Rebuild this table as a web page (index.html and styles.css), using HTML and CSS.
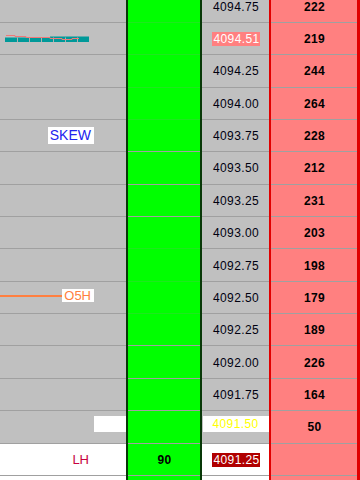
FILE: index.html
```html
<!DOCTYPE html>
<html>
<head>
<meta charset="utf-8">
<link rel="stylesheet" href="styles.css">
</head>
<body>
<div class="ladder">
  <div class="row">
    <div class="cell c-left"><div class="lbl"></div><div class="slot"></div></div>
    <div class="cell c-vol merged"></div>
    <div class="cell c-price">4094.75</div>
    <div class="cell c-ask">222</div>
  </div>
  <div class="row">
    <div class="cell c-left"><div class="lbl start">
      <svg class="spark" width="86" height="9" viewBox="0 0 86 9">
        <rect x="0" y="2.5" width="84" height="4.5" fill="#009999"/>
        <rect x="45" y="1.5" width="39" height="5.5" fill="#009999"/>
        <g stroke="#b0b0b0" stroke-width="1">
          <line x1="12.5" y1="2.5" x2="12.5" y2="7"/>
          <line x1="24.5" y1="2.5" x2="24.5" y2="7"/>
          <line x1="36.5" y1="2.5" x2="36.5" y2="7"/>
          <line x1="48.5" y1="2.5" x2="48.5" y2="7"/>
          <line x1="60.5" y1="2.5" x2="60.5" y2="7"/>
          <line x1="72.5" y1="2.5" x2="72.5" y2="7"/>
        </g>
        <polyline points="1,0.5 10,0.5 10,1.5 21,1.5 21,2.5 45,2.5 45,3.5 57,3.5 57,4.5 67,4.5 67,3.5 74,3.5" fill="none" stroke="#f07878" stroke-width="1"/>
      </svg>
    </div><div class="slot"></div></div>
    <div class="cell c-vol merged"></div>
    <div class="cell c-price"><span class="pbox hi">4094.51</span></div>
    <div class="cell c-ask">219</div>
  </div>
  <div class="row">
    <div class="cell c-left"><div class="lbl"></div><div class="slot"></div></div>
    <div class="cell c-vol merged"></div>
    <div class="cell c-price">4094.25</div>
    <div class="cell c-ask">244</div>
  </div>
  <div class="row">
    <div class="cell c-left"><div class="lbl"></div><div class="slot"></div></div>
    <div class="cell c-vol merged"></div>
    <div class="cell c-price">4094.00</div>
    <div class="cell c-ask">264</div>
  </div>
  <div class="row">
    <div class="cell c-left"><div class="lbl"><span class="tag skew">SKEW</span></div><div class="slot"></div></div>
    <div class="cell c-vol"></div>
    <div class="cell c-price">4093.75</div>
    <div class="cell c-ask">228</div>
  </div>
  <div class="row">
    <div class="cell c-left"><div class="lbl"></div><div class="slot"></div></div>
    <div class="cell c-vol"></div>
    <div class="cell c-price">4093.50</div>
    <div class="cell c-ask">212</div>
  </div>
  <div class="row">
    <div class="cell c-left"><div class="lbl"></div><div class="slot"></div></div>
    <div class="cell c-vol"></div>
    <div class="cell c-price">4093.25</div>
    <div class="cell c-ask">231</div>
  </div>
  <div class="row">
    <div class="cell c-left"><div class="lbl"></div><div class="slot"></div></div>
    <div class="cell c-vol merged"></div>
    <div class="cell c-price">4093.00</div>
    <div class="cell c-ask">203</div>
  </div>
  <div class="row">
    <div class="cell c-left"><div class="lbl"></div><div class="slot"></div></div>
    <div class="cell c-vol merged"></div>
    <div class="cell c-price">4092.75</div>
    <div class="cell c-ask">198</div>
  </div>
  <div class="row">
    <div class="cell c-left"><div class="lbl up"><span class="oline"></span><span class="tag o5h">O5H</span></div><div class="slot"></div></div>
    <div class="cell c-vol merged"></div>
    <div class="cell c-price">4092.50</div>
    <div class="cell c-ask">179</div>
  </div>
  <div class="row">
    <div class="cell c-left"><div class="lbl"></div><div class="slot"></div></div>
    <div class="cell c-vol"></div>
    <div class="cell c-price">4092.25</div>
    <div class="cell c-ask">189</div>
  </div>
  <div class="row">
    <div class="cell c-left"><div class="lbl"></div><div class="slot"></div></div>
    <div class="cell c-vol"></div>
    <div class="cell c-price">4092.00</div>
    <div class="cell c-ask">226</div>
  </div>
  <div class="row">
    <div class="cell c-left"><div class="lbl"></div><div class="slot"></div></div>
    <div class="cell c-vol"></div>
    <div class="cell c-price">4091.75</div>
    <div class="cell c-ask">164</div>
  </div>
  <div class="row">
    <div class="cell c-left"><div class="lbl"></div><div class="slot"><span class="band"></span></div></div>
    <div class="cell c-vol"></div>
    <div class="cell c-price"><span class="band yellow">4091.50</span></div>
    <div class="cell c-ask">50</div>
  </div>
  <div class="row">
    <div class="cell c-left white"><div class="lbl"><span class="lh">LH</span></div><div class="slot"></div></div>
    <div class="cell c-vol">90</div>
    <div class="cell c-price white"><span class="pbox dark">4091.25</span></div>
    <div class="cell c-ask"></div>
  </div>
  <div class="row">
    <div class="cell c-left white"><div class="lbl"></div><div class="slot"></div></div>
    <div class="cell c-vol"></div>
    <div class="cell c-price white"></div>
    <div class="cell c-ask"></div>
  </div>
</div>
</body>
</html>
```

FILE: styles.css
```css
html, body {
  margin: 0;
  padding: 0;
  overflow: hidden;
}
body {
  width: 360px;
  height: 480px;
  background: #c0c0c0;
  font-family: "Liberation Sans", Arial, sans-serif;
}
.ladder {
  margin-top: -9.5px;
  display: flex;
  flex-direction: column;
}
.row {
  display: flex;
  height: 32.36px;
  flex: none;
}
.cell {
  box-shadow: inset 0 -1px 0 #a0a0a0;
  display: flex;
  align-items: center;
  justify-content: center;
  font-size: 12px;
  letter-spacing: 0.4px;
  padding-left: 1px;
  box-sizing: content-box;
}
.c-left {
  width: 126px;
  padding-left: 0;
  border-right: 2px solid #083808;
  background: #c0c0c0;
  justify-content: flex-end;
  align-items: stretch;
}
.c-vol {
  width: 71px;
  border-right: 2px solid #083808;
  background: #00ff00;
  font-weight: bold;
  color: #000;
}
.c-vol.merged {
  box-shadow: inset 0 -1px 0 #1ee81e;
}
.c-price {
  width: 66px;
  border-right: 2px solid #e00000;
  background: #c0c0c0;
  color: #000010;
}
.c-ask {
  width: 85px;
  border-right: 3px solid #e00000;
  background: #ff8080;
  font-weight: bold;
  color: #000;
}
.white {
  background: #ffffff;
}
.lbl {
  flex: 1;
  display: flex;
  align-items: center;
  justify-content: flex-end;
}
.lbl.start {
  justify-content: flex-start;
  padding-left: 5px;
}
.lbl.up {
  padding-bottom: 4px;
}
.slot {
  width: 32px;
  display: flex;
  align-items: center;
}
.spark {
  display: block;
  margin-top: 0;
}
.tag {
  background: #ffffff;
  letter-spacing: 0;
}
.skew {
  color: #2222ee;
  font-size: 14px;
  line-height: 17px;
  padding: 0 3px 0 2px;
  margin-bottom: 1px;
}
.oline {
  flex: 1;
  height: 2px;
  background: #ff7f40;
}
.o5h {
  color: #ff7f40;
  font-size: 13px;
  line-height: 13px;
  padding: 0 3px 0 2px;
}
.lh {
  color: #c80040;
  font-size: 13px;
  letter-spacing: 0;
  margin-right: 5px;
}
.band {
  display: flex;
  align-items: center;
  justify-content: center;
  align-self: center;
  width: 100%;
  height: 16px;
  background: #ffffff;
  margin-bottom: 6px;
}
.yellow {
  color: #ffff00;
  margin-left: -1px;
}
.pbox {
  line-height: 14px;
  padding: 0 0 0 1px;
  color: #ffffff;
}
.hi {
  background: #ff8080;
}
.dark {
  background: #b00000;
}
```
